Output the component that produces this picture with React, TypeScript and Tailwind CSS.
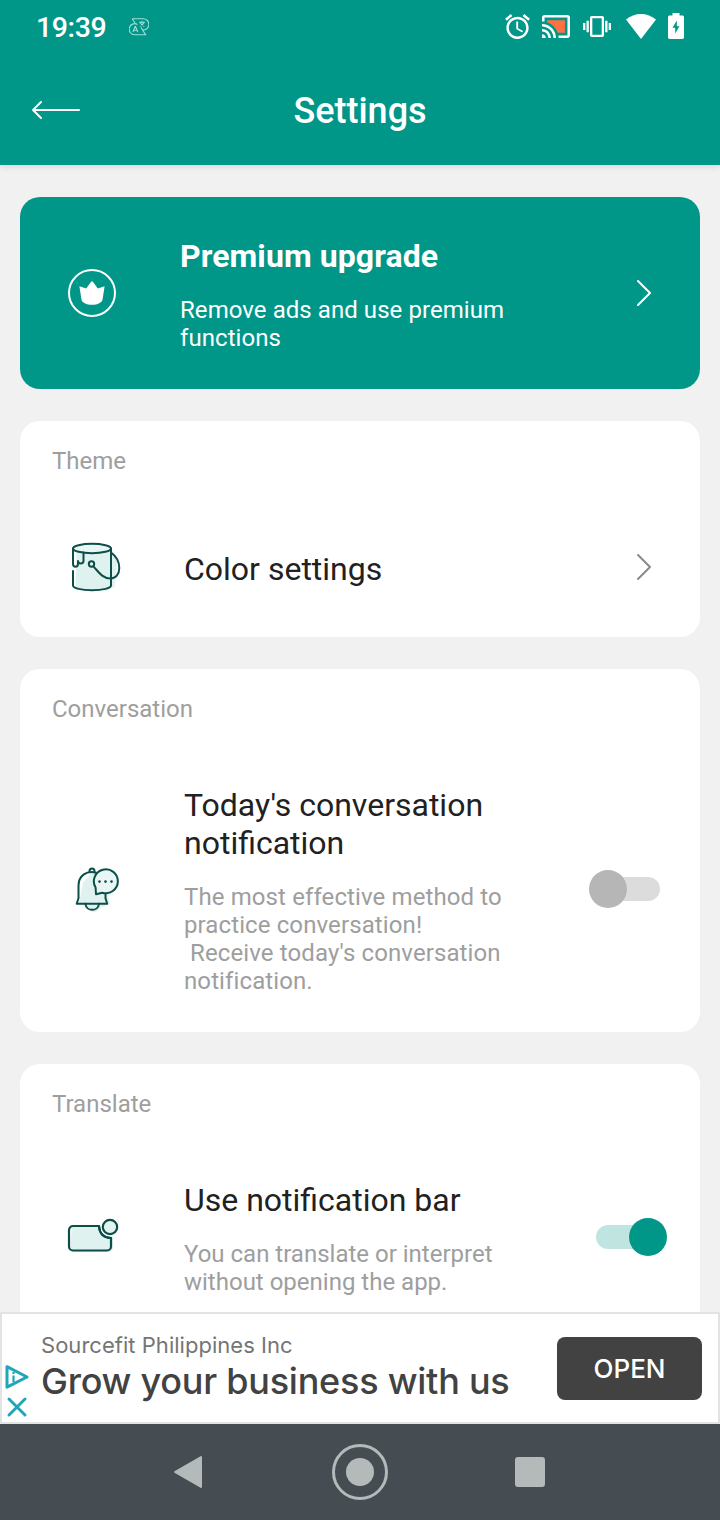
import React from 'react';

const teal = '#009688';
const ink = '#0d4f48';

function StatusBar() {
  return (
    <div className="flex h-[56px] items-center justify-between pl-[36px] pr-[36px] pb-[4px] text-white">
      <div className="flex items-center">
        <span className="w-[93px] text-[28.500px] font-medium leading-[34px] tracking-[-0.400px] pt-[4px]">19:39</span>
        <svg width="20" height="18" viewBox="0 0 20 18" fill="none" stroke="#9fe0d8" strokeWidth="1.100" className="mt-px">
          <path d="M3.200.8H14a5.600 5.600 0 0 1 .6 11.200h-1.200" />
          <path d="M3.200.8l3 4.400M12 9.500l4.600 7.200H6A5.500 5.500 0 1 1 8.500 6.500" />
          <path d="M4 14l2.100-5.500h.5L8.700 14M4.800 12.200h3.200" />
          <path d="M10 4.200h6M13 3v1.200M14.800 4.500c-.8 2-2.300 3.400-4 4M11.300 4.800c.8 1.800 2.200 3 4 3.700" />
        </svg>
      </div>
      <div className="flex items-center">
        <svg width="25" height="25" viewBox="2 1.86 20 20.14" fill="currentColor" className="mr-[12px]">
          <path d="M22 5.720l-4.600-3.860-1.290 1.530 4.600 3.860L22 5.720zM7.880 3.390L6.600 1.860 2 5.710l1.290 1.530 4.590-3.850zM12.500 8H11v6l4.750 2.850.75-1.230-4-2.370V8zM12 4c-4.970 0-9 4.030-9 9s4.020 9 9 9c4.970 0 9-4.030 9-9s-4.030-9-9-9zm0 16c-3.870 0-7-3.130-7-7s3.130-7 7-7 7 3.130 7 7-3.130 7-7 7z" />
        </svg>
        <svg width="28" height="23" viewBox="1 3 22 18" fill="currentColor" className="mr-[13px]">
          <path d="M5 7v1.630c3.960 1.280 7.090 4.410 8.370 8.370H19V7z" fill="#ff7043" />
          <path d="M21 3H3c-1.100 0-2 .9-2 2v3h2V5h18v14h-7v2h7c1.100 0 2-.9 2-2V5c0-1.100-.9-2-2-2zM1 18v3h3c0-1.660-1.340-3-3-3zm0-4v2c2.760 0 5 2.240 5 5h2c0-3.870-3.130-7-7-7zm0-4v2c4.970 0 9 4.030 9 9h2c0-6.080-4.930-11-11-11z" />
        </svg>
        <svg width="28" height="21" viewBox="0 3 24 18" fill="currentColor" className="mr-[15px]">
          <path d="M0 15h2V9H0v6zm3 2h2V7H3v10zm19-8v6h2V9h-2zm-3 8h2V7h-2v10zM16.500 3h-9C6.670 3 6 3.670 6 4.500v15c0 .83.67 1.500 1.500 1.500h9c.83 0 1.500-.67 1.500-1.500v-15c0-.83-.67-1.500-1.500-1.500zM16 19H8V5h8v14z" />
        </svg>
        <svg width="30" height="25" viewBox="0 0 30 25" fill="currentColor" className="mr-[12px]">
          <path d="M15 25L0 5.500C4.300 2 9.500 0 15 0s10.700 2 15 5.500z" />
        </svg>
        <svg width="16" height="26" viewBox="0 0 16 26" fill="currentColor">
          <path d="M4.500 0h7v2.500h2.800c1 0 1.700.7 1.700 1.700v20.100c0 1-.7 1.700-1.700 1.700H1.700C.7 26 0 25.300 0 24.300V4.200c0-1 .7-1.700 1.700-1.700h2.800z" />
          <path d="M8.800 7.500v5.700h2.700L7.200 20.500v-5.700H4.500z" fill={teal} />
        </svg>
      </div>
    </div>
  );
}

function Chevron({ color }: { color: string }) {
  return (
    <svg width="16" height="28" viewBox="0 0 16 28" fill="none" stroke={color} strokeWidth="2" strokeLinecap="round" strokeLinejoin="round">
      <path d="M2 2l12 12L2 26" />
    </svg>
  );
}

function CrownIcon() {
  return (
    <svg width="48" height="48" viewBox="0 0 48 48">
      <circle cx="24" cy="24" r="23" fill="none" stroke="#fff" strokeWidth="2" />
      <path d="M11.400 17.200l6.800 2.200 4.900-6.600q.9-1 1.800 0l4.900 6.600 6.800-2.200-2 13c-.6 3.600-5 5.500-10.600 5.500s-10-1.900-10.600-5.500z" fill="#fff" />
    </svg>
  );
}

function BucketIcon() {
  return (
    <svg width="52" height="50" viewBox="0.5 -0.5 52 50" fill="none" stroke={ink} strokeWidth="2" strokeLinecap="round" strokeLinejoin="round">
      <path d="M6 7h35l6 8-3 29-7 4H10l-5-5z" fill="#dff2f0" stroke="none" />
      <ellipse cx="21.500" cy="6" rx="19" ry="4.700" fill="#e9f6f5" />
      <path d="M40.500 6v37c0 2.700-8.500 4.700-19 4.700S2.500 45.700 2.500 43V28.500" />
      <path d="M2.500 6v15.500c0 3.600 5 3.600 5 0v-2.700M7.500 18.500c0 3.200 5.500 3.200 5.500 0V10" />
      <circle cx="21" cy="21.500" r="2.700" />
      <path d="M23 24c4.800 5.200 9 12 17 12 5 0 8.800-4 8.800-10.500 0-6.700-3.500-12-8.300-15.500" />
    </svg>
  );
}

function BellIcon() {
  return (
    <svg width="44" height="46" viewBox="0 0 44 46" fill="none" stroke={ink} strokeWidth="2" strokeLinecap="round" strokeLinejoin="round">
      <path d="M4 36l4-20 8-10 14-3 9 2 5 10-3 8-8 6 2 8-10 4-4 4h-4l-6-5z" fill="#dff2f0" stroke="none" />
      <path d="M14.500 4.800V4a2.500 2.500 0 0 1 5 0v.8" />
      <path d="M21 5.700c-9-2.700-17.500 2.800-17.500 13v12.500L1.700 36.700h30.500l-1.700-5.500V27" />
      <path d="M10.500 36.700c.6 8.200 12.800 8.200 13.400 0" />
      <path d="M21 27.300l-.4-6.800a12 12 0 1 1 6.600 5.200z" fill="#e9f6f5" />
      <g fill={ink} stroke="none">
        <circle cx="24.500" cy="14.600" r="1.300" />
        <circle cx="30.500" cy="14.600" r="1.300" />
        <circle cx="36.500" cy="14.600" r="1.300" />
      </g>
    </svg>
  );
}

function BannerIcon() {
  return (
    <svg width="54" height="36" viewBox="0 0 54 36" fill="none" stroke={ink} strokeWidth="2.200" strokeLinecap="round" strokeLinejoin="round">
      <path d="M5 9h29l8-6h10v9l-6 5v14l-3 3H6l-3-4z" fill="#dff2f0" stroke="none" />
      <path d="M32 8H6a4 4 0 0 0-4 4v16.500a4 4 0 0 0 4 4h34a4 4 0 0 0 4-4V20.200C37 19.700 32.500 15.500 32 8z" />
      <circle cx="43" cy="9" r="7.200" fill="#dff2f0" stroke="#fff" strokeWidth="5" />
      <circle cx="43" cy="9" r="7.200" fill="#e3f3f2" />
      <path d="M32 8c.5 7.500 5 11.700 12 12.200" />
    </svg>
  );
}

function Switch({ on }: { on?: boolean }) {
  if (on) {
    return (
      <div className="mb-[4px] flex h-[38px] w-[71px] items-center">
        <div className="h-6 w-[52px] rounded-l-full bg-[#c0e5e1]" />
        <div className="-ml-[19px] size-[38px] shrink-0 rounded-full bg-[#009688]" />
      </div>
    );
  }
  return (
    <div className="mb-[4px] flex h-[38px] w-[71px] items-center">
      <div className="z-10 size-[38px] shrink-0 rounded-full bg-[#b6b6b6]" />
      <div className="-ml-[19px] h-6 w-[52px] rounded-r-full bg-[#dcdcdc]" />
    </div>
  );
}

function Section({ label, className, children }: { label: string; className: string; children: React.ReactNode }) {
  return (
    <section className={`shrink-0 rounded-[20px] bg-white pt-[26px] ${className}`}>
      <h2 className="pl-8 text-[24px] leading-[28px] text-[#9e9e9e]">{label}</h2>
      {children}
    </section>
  );
}

function AdBanner() {
  return (
    <div className="flex h-[112px] shrink-0 items-center border-2 border-[#e1e3e5] bg-white">
      <div className="flex w-[39px] flex-col items-start gap-[8px] pl-[3px] pt-[46px]">
        <svg width="24" height="24" viewBox="0 0 24 24" fill="none" stroke="#1fa6b8" strokeWidth="3" strokeLinejoin="round">
          <path d="M2 1.700v20.500L22 12z" />
          <path d="M8.500 10.500V17M8.500 7v2" strokeWidth="2.200" />
        </svg>
        <svg width="20" height="20" viewBox="0 0 20 20" fill="none" stroke="#1fa6b8" strokeWidth="2.900" strokeLinecap="round" className="ml-[2px]">
          <path d="M2 2l16 16M18 2L2 18" />
        </svg>
      </div>
      <div className="flex-1 whitespace-nowrap pb-[3px] font-['Inter',sans-serif]">
        <p className="text-[22px] leading-[28px] tracking-[0.030px] text-[#757575]">Sourcefit Philippines Inc</p>
        <p className="text-[36px] font-medium leading-[44px] tracking-[-0.240px] text-[#424242]">Grow your business with us</p>
      </div>
      <button className="mr-4 h-[63px] w-[145px] rounded-[8px] bg-[#424242] font-['Inter',sans-serif] text-[26px] font-medium text-white">
        OPEN
      </button>
    </div>
  );
}

function NavBar() {
  return (
    <nav className="flex h-24 shrink-0 items-center bg-[#454d53] pl-[173px]">
      <svg width="30" height="34" viewBox="0 0 30 34">
        <path d="M2 17L28 2v30z" fill="#b4b9ba" stroke="#b4b9ba" strokeWidth="2" strokeLinejoin="round" />
      </svg>
      <svg width="56" height="56" viewBox="0 0 56 56" className="ml-[129px]">
        <circle cx="28" cy="28" r="26.500" fill="none" stroke="#b4b9ba" strokeWidth="3" />
        <circle cx="28" cy="28" r="14" fill="#b4b9ba" />
      </svg>
      <div className="ml-[127px] size-[30px] rounded-[3px] bg-[#b4b9ba]" />
    </nav>
  );
}

export default function App() {
  return (
    <div className="flex h-[1520px] w-[720px] flex-col overflow-hidden bg-[#f1f1f1] font-['Roboto',sans-serif]">
      <header className="z-10 h-[165px] shrink-0 bg-[#009688] shadow-[0_2px_6px_rgba(0,0,0,0.100)]">
        <StatusBar />
        <div className="flex h-[109px] items-center pl-[31px] pr-[80px]">
          <svg width="49" height="20" viewBox="0 0 49 20" fill="none" stroke="#fff" strokeWidth="2" strokeLinecap="round" strokeLinejoin="round" className="mb-[2px]">
            <path d="M48 10H2M10 2L2 10l8 8" />
          </svg>
          <h1 className="flex-1 pt-px text-center text-[36px] font-medium leading-[42px] text-white">Settings</h1>
        </div>
      </header>

      <main className="flex min-h-0 flex-1 flex-col gap-8 overflow-hidden px-5 pt-8">
        <section className="flex h-[192px] shrink-0 items-center rounded-[20px] bg-[#009688] pl-12 pr-12">
          <CrownIcon />
          <div className="ml-16 flex-1 pt-[2px] text-white">
            <h2 className="text-[32px] font-bold leading-[38px] tracking-[0.080px]">Premium upgrade</h2>
            <p className="mt-[21px] w-[360px] text-[24px] leading-[28px] tracking-[0.060px]">Remove ads and use premium functions</p>
          </div>
          <Chevron color="#fff" />
        </section>

        <Section label="Theme" className="h-[216px]">
          <div className="mt-[66px] flex h-[52px] items-center pl-[51px] pr-12">
            <BucketIcon />
            <h3 className="ml-[61px] flex-1 pt-[3px] text-[32px] leading-[38px] text-[#212121]">Color settings</h3>
            <Chevron color="#8a8a8a" />
          </div>
        </Section>

        <Section label="Conversation" className="h-[363px]">
          <div className="mt-[63px] flex items-center pl-[55px] pr-10">
            <div className="mb-[2px]">
              <BellIcon />
            </div>
            <div className="ml-[65px] flex-1">
              <h3 className="w-[340px] text-[32px] leading-[38px] text-[#212121]">Today's conversation notification</h3>
              <p className="mt-[21px] whitespace-pre text-[24px] leading-[28px] tracking-[0.110px] text-[#9e9e9e]">
                {"The most effective method to\npractice conversation!\n Receive today's conversation\nnotification."}
              </p>
            </div>
            <Switch />
          </div>
        </Section>

        <Section label="Translate" className="h-[363px]">
          <div className="mt-[63px] flex items-center pl-[47px] pr-[33px]">
            <div className="mb-[6px]">
              <BannerIcon />
            </div>
            <div className="ml-[63px] flex-1">
              <h3 className="text-[32px] leading-[38px] text-[#212121]">Use notification bar</h3>
              <p className="mt-[21px] w-[340px] text-[24px] leading-[28px] text-[#9e9e9e]">You can translate or interpret without opening the app.</p>
            </div>
            <Switch on />
          </div>
        </Section>
      </main>

      <AdBanner />
      <NavBar />
    </div>
  );
}
